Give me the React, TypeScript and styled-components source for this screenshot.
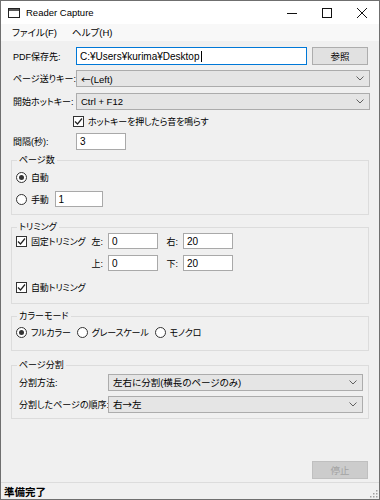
import React from 'react';
import styled, { createGlobalStyle } from 'styled-components';

const Global = createGlobalStyle`
  html, body { margin: 0; padding: 0; background: #ffffff; }
  body {
    font-family: "Liberation Sans", "Noto Sans CJK JP", sans-serif;
    font-size: 9px;
    color: #000;
  }
  * { box-sizing: border-box; }
`;

const Window = styled.div`
  width: 380px;
  height: 500px;
  border: 1px solid #6f6f6f;
  background: #f0f0f0;
  display: flex;
  flex-direction: column;
  overflow: hidden;
  font-feature-settings: "palt";
`;

const TitleBar = styled.div`
  height: 23px;
  flex-shrink: 0;
  background: #ffffff;
  display: flex;
  align-items: center;
`;

const AppIcon = styled.svg`
  margin-left: 7px;
  flex-shrink: 0;
`;

const Title = styled.span`
  margin-left: 6px;
  font-family: "Liberation Sans", sans-serif;
  font-size: 9.5px;
  color: #000;
  flex: 1;
`;

const CtrlBtn = styled.div`
  width: 35px;
  height: 23px;
  display: flex;
  align-items: center;
  justify-content: center;
`;

const MenuBar = styled.div`
  height: 17px;
  flex-shrink: 0;
  background: #f8f8f8;
  display: flex;
  align-items: center;
  padding-left: 5px;
`;

const MenuItem = styled.span<{ $ml?: number }>`
  padding: 0 6px;
  margin-left: ${(p) => p.$ml ?? 0}px;
  line-height: 17px;
  font-size: 9.5px;
`;

const Form = styled.div`
  flex: 1;
  display: flex;
  flex-direction: column;
  padding: 0 9px 0 10px;
`;

const Row = styled.div<{ $top: number; $h?: number }>`
  display: flex;
  align-items: center;
  margin-top: ${(p) => p.$top}px;
  height: ${(p) => p.$h ?? 17}px;
`;

const Label = styled.span<{ $w: number; $pl?: number }>`
  width: ${(p) => p.$w}px;
  padding-left: ${(p) => p.$pl ?? 1}px;
  flex-shrink: 0;
  white-space: nowrap;
`;

const TextBox = styled.div<{ $w: number; $focus?: boolean; $h?: number }>`
  width: ${(p) => p.$w}px;
  height: ${(p) => p.$h ?? 17}px;
  background: #ffffff;
  border: 1px solid ${(p) => (p.$focus ? '#0078d7' : '#a9a9a9')};
  display: flex;
  align-items: center;
  padding-left: 3px;
  flex-shrink: 0;
  white-space: nowrap;
  font-size: 10px;
`;

const Caret = styled.span`
  display: inline-block;
  width: 1px;
  height: 11px;
  background: #000;
  margin-left: 1px;
`;

const Button = styled.div<{ $disabled?: boolean }>`
  width: 56px;
  height: 18px;
  background: ${(p) => (p.$disabled ? '#cccccc' : '#e1e1e1')};
  border: 1px solid ${(p) => (p.$disabled ? '#bfbfbf' : '#adadad')};
  color: ${(p) => (p.$disabled ? '#a3a3a3' : '#000')};
  display: flex;
  align-items: center;
  justify-content: center;
  flex-shrink: 0;
  font-size: 9.5px;
`;

const SelectBox = styled.div<{ $w?: number }>`
  ${(p) => (p.$w ? `width: ${p.$w}px;` : 'flex: 1;')}
  height: 17px;
  background: #e5e5e5;
  border: 1px solid #acacac;
  display: flex;
  align-items: center;
  padding: 0 5px 0 4px;
  white-space: nowrap;
`;

const SelectText = styled.span`
  flex: 1;
  font-size: 9.5px;
`;

const Arrow = styled.span`
  font-family: "Noto Sans CJK JP", sans-serif;
`;

const CheckRow = styled.label<{ $w?: number }>`
  display: flex;
  align-items: center;
  gap: 4px;
  white-space: nowrap;
  letter-spacing: -0.2px;
  ${(p) => (p.$w ? `width: ${p.$w}px; flex-shrink: 0;` : '')}
`;

const Box = styled.span`
  width: 11px;
  height: 11px;
  border: 1px solid #333333;
  background: #ffffff;
  display: flex;
  align-items: center;
  justify-content: center;
  flex-shrink: 0;
`;

const Radio = styled.span<{ $on?: boolean }>`
  width: 11px;
  height: 11px;
  border-radius: 50%;
  border: 1px solid #333333;
  background: #ffffff;
  display: flex;
  align-items: center;
  justify-content: center;
  flex-shrink: 0;
  &::after {
    content: '';
    width: 5px;
    height: 5px;
    border-radius: 50%;
    background: ${(p) => (p.$on ? '#333333' : 'transparent')};
  }
`;

const Group = styled.fieldset<{ $top: number; $pt: number; $pb: number }>`
  margin: ${(p) => p.$top}px 1px 0 0;
  padding: ${(p) => p.$pt}px 5px ${(p) => p.$pb}px 4px;
  border: 1px solid #dcdcdc;
  min-width: 0;
  display: flex;
  flex-direction: column;
`;

const Legend = styled.legend`
  padding: 0 2px;
  margin-left: 1px;
  line-height: 12px;
  font-size: 9px;
`;

const GRow = styled.div<{ $top?: number; $gap?: number }>`
  display: flex;
  align-items: center;
  height: 16px;
  margin-top: ${(p) => p.$top ?? 0}px;
  gap: ${(p) => p.$gap ?? 0}px;
`;

const AxisLabel = styled.span<{ $w: number }>`
  width: ${(p) => p.$w}px;
  text-align: right;
  padding-right: 5px;
  flex-shrink: 0;
`;

const Filler = styled.div`
  flex: 1;
`;

const Footer = styled.div`
  display: flex;
  justify-content: flex-end;
  padding-right: 2px;
  margin-bottom: 3px;
`;

const StatusBar = styled.div`
  height: 17px;
  flex-shrink: 0;
  border-top: 1px solid #dcdcdc;
  display: flex;
  align-items: center;
  padding-left: 3px;
  font-weight: bold;
  font-size: 10.5px;
`;

const StatusText = styled.span`
  flex: 1;
  font-family: "Noto Sans CJK JP", sans-serif;
`;

const Grip = styled.svg`
  margin-right: 1px;
  align-self: flex-end;
  margin-bottom: 1px;
`;

const Chevron = () => (
  <svg width="8" height="5" viewBox="0 0 8 5">
    <polyline points="0.5,0.5 4,4 7.5,0.5" fill="none" stroke="#606060" strokeWidth="1" />
  </svg>
);

const Check = () => (
  <svg width="9" height="9" viewBox="0 0 9 9">
    <polyline points="1,4.5 3.5,7 8,1.5" fill="none" stroke="#222" strokeWidth="1.2" />
  </svg>
);

const Select: React.FC<{ children: React.ReactNode; w?: number }> = ({ children, w }) => (
  <SelectBox $w={w}>
    <SelectText>{children}</SelectText>
    <Chevron />
  </SelectBox>
);

export default function App() {
  return (
    <>
      <Global />
      <Window>
        <TitleBar>
          <AppIcon width="12" height="10" viewBox="0 0 12 10">
            <rect x="0.5" y="0.5" width="11" height="9" fill="none" stroke="#222" />
            <line x1="0" y1="2" x2="12" y2="2" stroke="#222" strokeWidth="1.5" />
          </AppIcon>
          <Title>Reader Capture</Title>
          <CtrlBtn>
            <svg width="10" height="10" viewBox="0 0 10 10">
              <line x1="0" y1="5.5" x2="10" y2="5.5" stroke="#111" />
            </svg>
          </CtrlBtn>
          <CtrlBtn>
            <svg width="10" height="10" viewBox="0 0 10 10">
              <rect x="0.5" y="0.5" width="9" height="9" fill="none" stroke="#111" />
            </svg>
          </CtrlBtn>
          <CtrlBtn>
            <svg width="10" height="10" viewBox="0 0 10 10">
              <line x1="0" y1="0" x2="10" y2="10" stroke="#111" />
              <line x1="10" y1="0" x2="0" y2="10" stroke="#111" />
            </svg>
          </CtrlBtn>
        </TitleBar>
        <MenuBar>
          <MenuItem>ファイル(F)</MenuItem>
          <MenuItem $ml={3}>ヘルプ(H)</MenuItem>
        </MenuBar>
        <Form>
          <Row $top={6} $h={18}>
            <Label $w={65} $pl={2}>PDF保存先:</Label>
            <TextBox $w={231} $h={18} $focus>
              C:¥Users¥kurima¥Desktop
              <Caret />
            </TextBox>
            <Filler />
            <Button style={{ marginRight: 2 }}>参照</Button>
          </Row>
          <Row $top={5}>
            <Label $w={65} $pl={2}>ページ送りキー:</Label>
            <Select>
              <Arrow>←</Arrow>(Left)
            </Select>
          </Row>
          <Row $top={6}>
            <Label $w={65} $pl={2}>開始ホットキー:</Label>
            <Select>Ctrl + F12</Select>
          </Row>
          <Row $top={4} $h={14}>
            <Label $w={62} />
            <CheckRow>
              <Box>
                <Check />
              </Box>
              ホットキーを押したら音を鳴らす
            </CheckRow>
          </Row>
          <Row $top={5}>
            <Label $w={65} $pl={2}>間隔(秒):</Label>
            <TextBox $w={50}>3</TextBox>
          </Row>

          <Group $top={4} $pt={3} $pb={7}>
            <Legend>ページ数</Legend>
            <GRow>
              <CheckRow>
                <Radio $on />
                自動
              </CheckRow>
            </GRow>
            <GRow $top={6} $gap={6}>
              <CheckRow>
                <Radio />
                手動
              </CheckRow>
              <TextBox $w={48} $h={16}>1</TextBox>
            </GRow>
          </Group>

          <Group $top={6} $pt={0} $pb={8}>
            <Legend>トリミング</Legend>
            <GRow>
              <CheckRow $w={74}>
                <Box>
                  <Check />
                </Box>
                固定トリミング
              </CheckRow>
              <AxisLabel $w={18}>左:</AxisLabel>
              <TextBox $w={50} $h={16}>0</TextBox>
              <AxisLabel $w={25}>右:</AxisLabel>
              <TextBox $w={50} $h={16}>20</TextBox>
            </GRow>
            <GRow $top={6}>
              <Label $w={74} $pl={0} />
              <AxisLabel $w={18}>上:</AxisLabel>
              <TextBox $w={50} $h={16}>0</TextBox>
              <AxisLabel $w={25}>下:</AxisLabel>
              <TextBox $w={50} $h={16}>20</TextBox>
            </GRow>
            <GRow $top={8}>
              <CheckRow>
                <Box>
                  <Check />
                </Box>
                自動トリミング
              </CheckRow>
            </GRow>
          </Group>

          <Group $top={6} $pt={2} $pb={10}>
            <Legend>カラーモード</Legend>
            <GRow $gap={6}>
              <CheckRow>
                <Radio $on />
                フルカラー
              </CheckRow>
              <CheckRow>
                <Radio />
                グレースケール
              </CheckRow>
              <CheckRow>
                <Radio />
                モノクロ
              </CheckRow>
            </GRow>
          </Group>

          <Group $top={8} $pt={3} $pb={6}>
            <Legend>ページ分割</Legend>
            <GRow>
              <Label $w={92} $pl={3}>分割方法:</Label>
              <Select>左右に分割(横長のページのみ)</Select>
            </GRow>
            <GRow $top={6}>
              <Label $w={92} $pl={3}>分割したページの順序:</Label>
              <Select>
                右<Arrow>→</Arrow>左
              </Select>
            </GRow>
          </Group>

          <Filler />
          <Footer>
            <Button $disabled>停止</Button>
          </Footer>
        </Form>
        <StatusBar>
          <StatusText>準備完了</StatusText>
          <Grip width="10" height="10" viewBox="0 0 10 10">
            {[
              [8, 2],
              [8, 5],
              [8, 8],
              [5, 5],
              [5, 8],
              [2, 8],
            ].map(([x, y], i) => (
              <rect key={i} x={x} y={y} width="1.5" height="1.5" fill="#a0a0a0" />
            ))}
          </Grip>
        </StatusBar>
      </Window>
    </>
  );
}
